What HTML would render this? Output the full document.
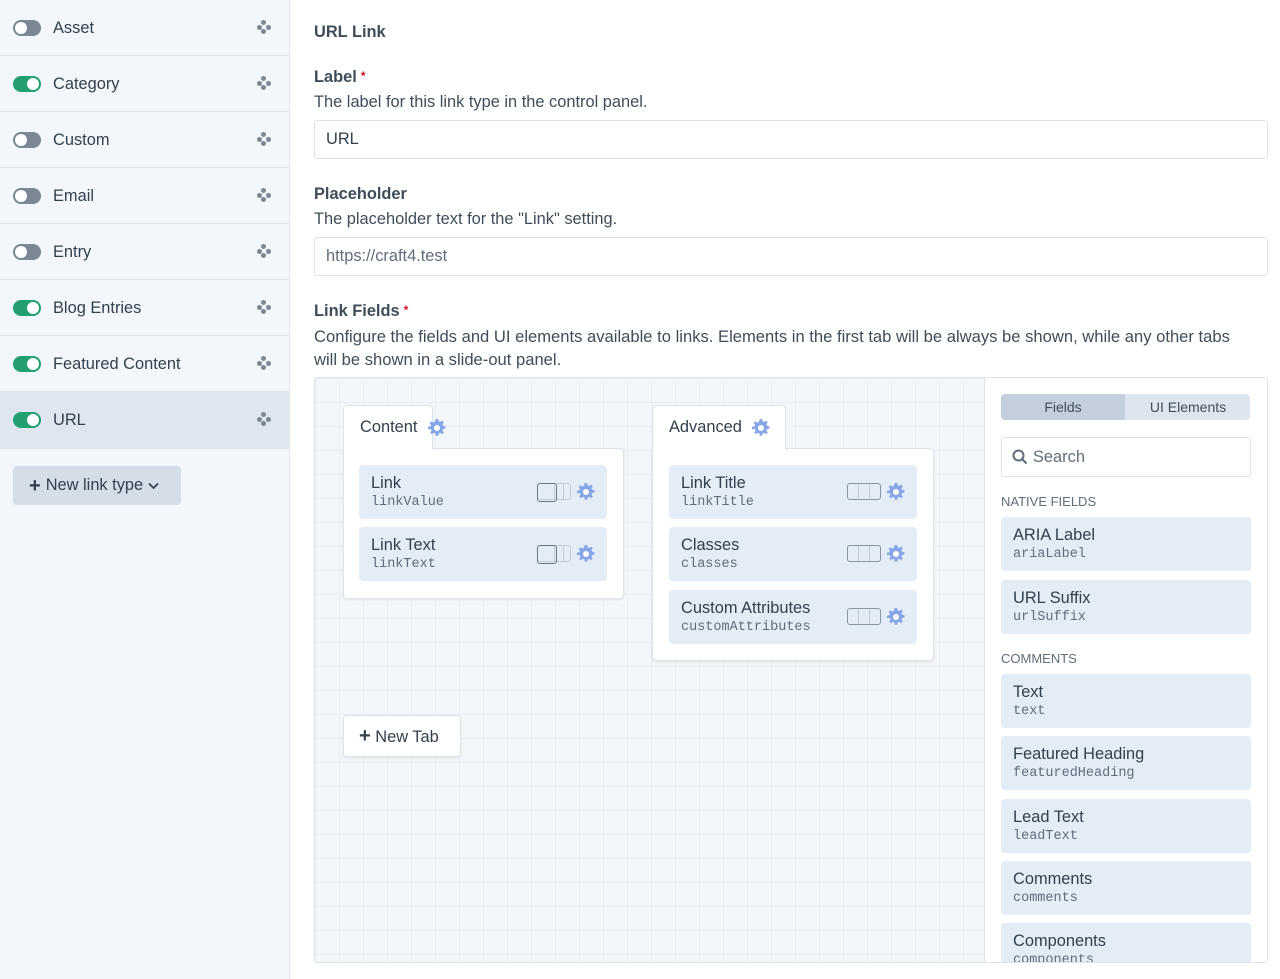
<!DOCTYPE html><html><head><style>
*{box-sizing:border-box;margin:0;padding:0}
body{width:1280px;height:979px;overflow:hidden;font-family:"Liberation Sans",sans-serif;color:#3f4d5a;background:#fff;position:relative;font-size:16.4px}
.side{position:absolute;left:0;top:0;width:290px;height:979px;background:#f3f7fc;border-right:1px solid #e3e8ef}
.row{position:absolute;left:0;width:289px;height:56px;border-bottom:1px solid #dde3ea;display:flex;align-items:center}
.row.sel{background:#dfe6ef}
.tg{position:absolute;left:13px;top:20px;width:28px;height:16px;border-radius:8px;background:#7b8794}
.tg::after{content:"";position:absolute;top:2px;left:2px;width:12px;height:12px;border-radius:50%;background:#fff}
.tg.on{background:#23a06f}.tg.on::after{left:14px}
.row .t{position:absolute;left:53px;top:19px;color:#33404d}
.mv{position:absolute;left:257px;top:20px;width:14px;height:14px}
.mv i{position:absolute;width:5px;height:5px;border-radius:50%;background:#7b8794}
.btn{position:absolute;left:13px;top:466px;width:168px;height:39px;background:#d4dde8;border-radius:4px;color:#33404d;display:flex;align-items:center;padding-left:16px}
.a{position:absolute}
h4{position:absolute;left:314px;font-size:16.4px;font-weight:bold;color:#3f4d5a}
h4 b{color:#cf1124;font-size:12px;vertical-align:2px;margin-left:4px}
.d{position:absolute;left:314px;color:#3f4d5a}
.in{position:absolute;left:314px;width:954px;height:39px;border:1px solid #dde3ea;border-radius:3px;padding-left:11px;line-height:37px}
.lay{position:absolute;left:314px;top:377px;width:954px;height:586px;border:1px solid #dde3ea;border-radius:3px;overflow:hidden}
.grid{position:absolute;left:0;top:0;width:670px;height:586px;background-color:#f3f6fa;background-image:linear-gradient(#eaeef3 1px,transparent 1px),linear-gradient(90deg,#eaeef3 1px,transparent 1px);background-size:24px 24px;border-right:1px solid #dde3ea}
.tab{position:absolute;background:#fff;border:1px solid #dde3ea;border-bottom:none;border-radius:4px 4px 0 0;padding-left:16px;line-height:42px;color:#33404d}
.body{position:absolute;background:#fff;border:1px solid #dde3ea;border-radius:0 4px 4px 4px;box-shadow:0 1px 2px rgba(0,0,0,.08)}
.f{position:absolute;background:#e4ecf6;border-radius:4px;padding:9px 12px;color:#33404d}
.f .n{line-height:19px}
.f .h{font-family:"Liberation Mono",monospace;font-size:13.5px;color:#606d7b;line-height:19px}
.gear{position:absolute;width:18px;height:18px}
.sw{position:absolute;width:34px;height:17px;border:1px solid #c3cbd5;border-radius:3px;background:linear-gradient(90deg,transparent 16px,#c3cbd5 16px,#c3cbd5 17px,transparent 17px,transparent 25px,#c3cbd5 25px,#c3cbd5 26px,transparent 26px)}
.sw.l::before{content:"";position:absolute;left:-1px;top:-1px;width:18px;height:17px;border:1px solid #6b7785;border-radius:3px}
.sw.a2{border-color:#8b96a3;background:linear-gradient(90deg,transparent 10px,#c3cbd5 10px,#c3cbd5 11px,transparent 11px,transparent 21px,#c3cbd5 21px,#c3cbd5 22px,transparent 22px)}
.seg{position:absolute;left:686px;top:16px;width:249px;height:26px;background:#dfe5ee;border-radius:4px;font-size:14px;color:#3f4d5a}
.seg div{position:absolute;top:0;height:26px;line-height:26px;text-align:center}
.sh{position:absolute;left:686px;font-size:13px;color:#606d7b}
</style></head><body>
<svg width="0" height="0" style="position:absolute"><defs><g id="g"><path fill="#86a6e8" d="M7.8 0h2.4l.4 2.3 1.6.7 1.9-1.4 1.7 1.7-1.4 1.9.7 1.6 2.3.4v2.4l-2.3.4-.7 1.6 1.4 1.9-1.7 1.7-1.9-1.4-1.6.7-.4 2.3H7.8l-.4-2.3-1.6-.7-1.9 1.4-1.7-1.7 1.4-1.9-.7-1.6L0 10.2V7.8l2.3-.4.7-1.6-1.4-1.9 1.7-1.7 1.9 1.4 1.6-.7z"/><circle cx="9" cy="9" r="3" fill="#fff"/></g></defs></svg>
<div class="side">
<div class="row" style="top:0"><span class="tg"></span><span class="t">Asset</span><span class="mv"><i style="left:4px;top:0"></i><i style="left:0;top:5px"></i><i style="left:9px;top:5px"></i><i style="left:4px;top:9px"></i></span></div>
<div class="row" style="top:56px"><span class="tg on"></span><span class="t">Category</span><span class="mv"><i style="left:4px;top:0"></i><i style="left:0;top:5px"></i><i style="left:9px;top:5px"></i><i style="left:4px;top:9px"></i></span></div>
<div class="row" style="top:112px"><span class="tg"></span><span class="t">Custom</span><span class="mv"><i style="left:4px;top:0"></i><i style="left:0;top:5px"></i><i style="left:9px;top:5px"></i><i style="left:4px;top:9px"></i></span></div>
<div class="row" style="top:168px"><span class="tg"></span><span class="t">Email</span><span class="mv"><i style="left:4px;top:0"></i><i style="left:0;top:5px"></i><i style="left:9px;top:5px"></i><i style="left:4px;top:9px"></i></span></div>
<div class="row" style="top:224px"><span class="tg"></span><span class="t">Entry</span><span class="mv"><i style="left:4px;top:0"></i><i style="left:0;top:5px"></i><i style="left:9px;top:5px"></i><i style="left:4px;top:9px"></i></span></div>
<div class="row" style="top:280px"><span class="tg on"></span><span class="t">Blog Entries</span><span class="mv"><i style="left:4px;top:0"></i><i style="left:0;top:5px"></i><i style="left:9px;top:5px"></i><i style="left:4px;top:9px"></i></span></div>
<div class="row" style="top:336px"><span class="tg on"></span><span class="t">Featured Content</span><span class="mv"><i style="left:4px;top:0"></i><i style="left:0;top:5px"></i><i style="left:9px;top:5px"></i><i style="left:4px;top:9px"></i></span></div>
<div class="row sel" style="top:392px;height:57px"><span class="tg on"></span><span class="t">URL</span><span class="mv"><i style="left:4px;top:0"></i><i style="left:0;top:5px"></i><i style="left:9px;top:5px"></i><i style="left:4px;top:9px"></i></span></div>
<div class="btn"><b style="font-size:20px;margin-right:5px;line-height:16px">+</b>New link type <svg style="margin-left:5px" width="11" height="8" viewBox="0 0 11 8"><path d="M1 1.5l4.5 4.5 4.5-4.5" fill="none" stroke="#33404d" stroke-width="1.8"/></svg></div>
</div>
<h4 style="top:23px">URL Link</h4>
<h4 style="top:68px">Label<b>*</b></h4>
<div class="d" style="top:93px">The label for this link type in the control panel.</div>
<div class="in" style="top:120px;color:#33404d">URL</div>
<h4 style="top:185px">Placeholder</h4>
<div class="d" style="top:210px">The placeholder text for the "Link" setting.</div>
<div class="in" style="top:237px;color:#606d7b">https://craft4.test</div>
<h4 style="top:302px">Link Fields<b>*</b></h4>
<div class="d" style="top:325px;width:950px;line-height:23px;font-size:16.6px">Configure the fields and UI elements available to links. Elements in the first tab will be always be shown, while any other tabs<br>will be shown in a slide-out panel.</div>
<div class="lay"><div class="grid">
<div class="body" style="left:28px;top:70px;width:281px;height:151px"></div>
<div class="tab" style="left:28px;top:27px;width:90px;height:45px">Content <svg class="gear" style="left:84px;top:13px" viewBox="0 0 18 18"><use href="#g"/></svg></div>
<div class="f" style="left:44px;top:87px;width:248px;height:54px"><div class="n">Link</div><div class="h">linkValue</div><span class="sw l" style="left:178px;top:18px"></span><svg class="gear" style="left:218px;top:18px" viewBox="0 0 18 18"><use href="#g"/></svg></div>
<div class="f" style="left:44px;top:149px;width:248px;height:54px"><div class="n">Link Text</div><div class="h">linkText</div><span class="sw l" style="left:178px;top:18px"></span><svg class="gear" style="left:218px;top:18px" viewBox="0 0 18 18"><use href="#g"/></svg></div>
<div class="body" style="left:337px;top:70px;width:282px;height:213px"></div>
<div class="tab" style="left:337px;top:27px;width:134px;height:45px">Advanced <svg class="gear" style="left:99px;top:13px" viewBox="0 0 18 18"><use href="#g"/></svg></div>
<div class="f" style="left:354px;top:87px;width:248px;height:54px"><div class="n">Link Title</div><div class="h">linkTitle</div><span class="sw a2" style="left:178px;top:18px"></span><svg class="gear" style="left:218px;top:18px" viewBox="0 0 18 18"><use href="#g"/></svg></div>
<div class="f" style="left:354px;top:149px;width:248px;height:54px"><div class="n">Classes</div><div class="h">classes</div><span class="sw a2" style="left:178px;top:18px"></span><svg class="gear" style="left:218px;top:18px" viewBox="0 0 18 18"><use href="#g"/></svg></div>
<div class="f" style="left:354px;top:212px;width:248px;height:54px"><div class="n">Custom Attributes</div><div class="h">customAttributes</div><span class="sw a2" style="left:178px;top:18px"></span><svg class="gear" style="left:218px;top:18px" viewBox="0 0 18 18"><use href="#g"/></svg></div>
<div class="a" style="left:28px;top:337px;width:118px;height:42px;background:#fff;border:1px solid #dde3ea;border-radius:4px;line-height:40px;padding-left:15px;color:#33404d;box-shadow:0 1px 2px rgba(0,0,0,.08)"><b style="font-size:20px">+</b> New Tab</div>
</div>
<div class="seg"><div style="left:0;width:124px;background:#c3cfdc;border-radius:4px 0 0 4px">Fields</div><div style="left:125px;width:124px">UI Elements</div></div>
<div class="a" style="left:686px;top:59px;width:250px;height:40px;border:1px solid #dde3ea;border-radius:3px;line-height:38px;padding-left:31px;color:#606d7b"><svg style="position:absolute;left:10px;top:11px" width="16" height="16" viewBox="0 0 16 16"><circle cx="6.5" cy="6.5" r="5" fill="none" stroke="#606d7b" stroke-width="2"/><path d="M10 10l4.5 4.5" stroke="#606d7b" stroke-width="2.2"/></svg>Search</div>
<div class="sh" style="top:116px">NATIVE FIELDS</div>
<div class="f" style="left:686px;top:139px;width:250px;height:54px"><div class="n">ARIA Label</div><div class="h">ariaLabel</div></div>
<div class="f" style="left:686px;top:202px;width:250px;height:54px"><div class="n">URL Suffix</div><div class="h">urlSuffix</div></div>
<div class="sh" style="top:273px">COMMENTS</div>
<div class="f" style="left:686px;top:296px;width:250px;height:54px"><div class="n">Text</div><div class="h">text</div></div>
<div class="f" style="left:686px;top:358px;width:250px;height:54px"><div class="n">Featured Heading</div><div class="h">featuredHeading</div></div>
<div class="f" style="left:686px;top:421px;width:250px;height:54px"><div class="n">Lead Text</div><div class="h">leadText</div></div>
<div class="f" style="left:686px;top:483px;width:250px;height:54px"><div class="n">Comments</div><div class="h">comments</div></div>
<div class="f" style="left:686px;top:545px;width:250px;height:54px"><div class="n">Components</div><div class="h">components</div></div>
</div>
</body></html>
